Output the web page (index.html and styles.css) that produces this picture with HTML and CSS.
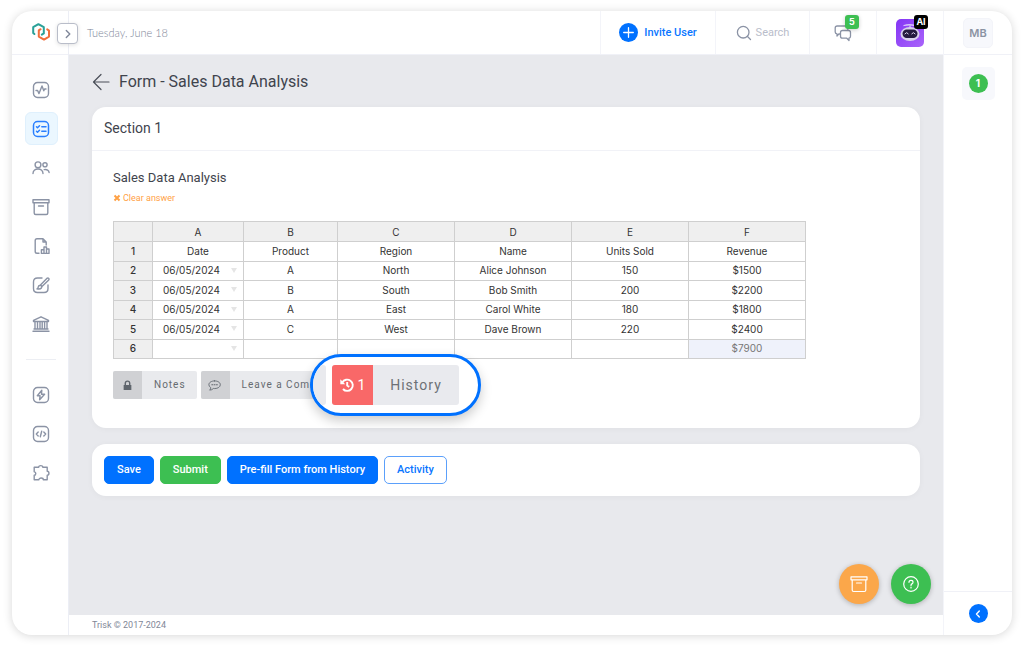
FILE: index.html
```html
<!DOCTYPE html>
<html lang="en">
<head>
<meta charset="utf-8">
<meta name="viewport" content="width=device-width, initial-scale=1">
<title>Form - Sales Data Analysis</title>
<link rel="stylesheet" href="styles.css">
</head>
<body>
<div class="app">
  <aside class="side">
    <div class="side-head">
      <svg class="logo" viewBox="0 0 18 18" fill="none" stroke-width="2" stroke-linejoin="round" stroke-linecap="round">
        <path stroke="#2aa198" d="M2.4 11 1.200 10V4.200L6.400 1.200 11.800 4.200V10.400L9.800 11.600"/>
        <path stroke="#f26f3b" d="M8.600 6.200 6.800 7.400V13.600L12 16.600 17 13.600V7.600L15.200 6.400"/>
      </svg>
      <button class="toggle" type="button" aria-label="Expand menu"><svg viewBox="0 0 10 10"><path d="M3.300 1.500 6.800 5 3.300 8.500"/></svg></button>
    </div>
    <nav class="nav">
      <a href="#" aria-label="Dashboard"><svg viewBox="0 0 18 18"><rect x="1.500" y="1.500" width="15" height="15" rx="4"/><path d="M4 9.500h1.600L7 12.600 10 5l1.800 4.800L12.600 8H14"/></svg></a>
      <a href="#" class="active" aria-label="Forms"><svg viewBox="0 0 18 18"><rect x="1.500" y="1.500" width="15" height="15" rx="4"/><path d="m4.500 6.800 1 1 2-2M4.500 11.200l1 1 2-2M9.800 6.800H14M9.800 11.300H14"/></svg></a>
      <a href="#" aria-label="Users"><svg viewBox="0 0 18 18"><circle cx="6" cy="5.800" r="2.900"/><circle cx="13" cy="5.800" r="2.100"/><path d="M1 14.500c0-6 10-6 10 0M12.200 10.600c2.800-.5 4.700.7 4.900 2.900"/></svg></a>
      <a href="#" aria-label="Archive"><svg viewBox="0 0 18 18"><path d="M1 1.800h16v3H1zM2.200 4.800V15q0 1.500 1.500 1.500h10.600q1.500 0 1.500-1.500V4.800M6.500 8h5"/></svg></a>
      <a href="#" aria-label="Reports"><svg viewBox="0 0 18 18"><path d="M7 16.200H5q-1.800 0-1.800-1.800V3.600Q3.200 1.800 5 1.800h6l3.200 3.200v3M11 1.800V5h3.200M9.400 16.400v-3.600H12v3.600zM12 16.400V10h2.500v6.400zM14.500 12h2.500v4.400h-2.500z"/></svg></a>
      <a href="#" aria-label="Design"><svg viewBox="0 0 18 18"><path d="M10 2H5.500Q1.500 2 1.500 6v6.500q0 4 4 4h6.500q4 0 4-4V9M8.200 9.200 14.800 2.400q1.200-.9 1.900 0t-.2 1.800L9.700 10.800M8.200 9.200q2.400.6 1.200 2.800-1.200 1.500-4.400.8 1.300-.6 1.200-1.800.1-1.500 2-1.800z"/></svg></a>
      <a href="#" aria-label="Institution"><svg viewBox="0 0 18 18"><path d="M1.500 6.500V5.300L9 1.800l7.500 3.500v1.200zM3 6.500v7.300M5.500 6.500v7.300M8 6.500v7.300M10.200 6.500v7.300M12.600 6.500v7.300M15 6.500v7.300M2 14h14M1 16.300h16"/></svg></a>
      <hr>
      <a href="#" aria-label="Automations"><svg viewBox="0 0 18 18"><rect x="1.500" y="1.500" width="15" height="15" rx="4"/><path d="M9.800 4.300 5.300 9.700h2.800l-.5 4 5-5.400H9.500z"/></svg></a>
      <a href="#" aria-label="Developer"><svg viewBox="0 0 18 18"><rect x="1.500" y="1.500" width="15" height="15" rx="4"/><path d="M6.200 7 4.300 9l1.900 2M11.800 7l1.900 2-1.900 2M9.700 6.300l-1.400 5.400"/></svg></a>
      <a href="#" aria-label="Extensions"><svg viewBox="0 0 18 18"><path d="M2.200 3.300h4.500C6.600 1 10.900 1 10.800 3.300h4.400v4c2.300 0 2.300 3.900 0 3.900v4.500h-3.900c0-2.200-4.400-2.200-4.400 0H2.200v-4.400c2.100 0 2.100-3.600 0-3.600z"/></svg></a>
    </nav>
  </aside>

  <div class="center">
    <header class="top">
      <time class="date">Tuesday, June 18</time>
      <a href="#" class="cell invite"><svg viewBox="0 0 19 19"><circle cx="9.500" cy="9.500" r="9.500"/><path d="M9.500 4.700v9.600M4.700 9.500h9.600"/></svg>Invite User</a>
      <button type="button" class="cell search"><svg viewBox="0 0 16 16"><circle cx="7.200" cy="7.200" r="5.800"/><path d="m11.500 11.500 3 3"/></svg>Search</button>
      <button type="button" class="cell chat" aria-label="Messages">
        <span class="badge-host"><svg viewBox="0 0 18 18"><path d="M6 10H4.800L3 12v-2.200Q1.200 9.500 1.200 8V4q0-2 2-2h8.600q2 0 2 2v2M8.500 6.500h6q2 0 2 2v3.700q0 1.600-1.500 2v2.300L12.800 14.200H8.500q-2 0-2-2V8.500q0-2 2-2z"/></svg><span class="badge green">5</span></span>
      </button>
      <button type="button" class="cell ai" aria-label="AI assistant">
        <span class="badge-host bot"><svg viewBox="0 0 28 28"><path d="M8 6.500q5-1.500 11 0M14 6v3" stroke="#d9c6fb" stroke-width="1.300" fill="none"/><ellipse cx="14" cy="15" rx="9.500" ry="7" fill="#d8d0ec"/><rect x="6.500" y="10.500" width="15" height="8.500" rx="4.200" fill="#251a3f"/><path d="M8.900 14.800q1.700-2.600 3.400 0M15.700 14.800q1.700-2.600 3.400 0" stroke="#d8d0ec" stroke-width="1" fill="none"/></svg><span class="badge black">AI</span></span>
      </button>
    </header>

    <main class="main">
      <div class="title-row">
        <a href="#" class="back" aria-label="Back"><svg viewBox="0 0 18 18"><path d="M17 9H1.500M9 1.500 1.500 9 9 16.500"/></svg></a>
        <h1>Form - Sales Data Analysis</h1>
      </div>
      <section class="card">
        <h2 class="card-head">Section 1</h2>
        <div class="card-body">
          <h3>Sales Data Analysis</h3>
          <button type="button" class="clear"><svg viewBox="0 0 8 8"><path d="m1.500 1.500 5 5M6.500 1.500l-5 5"/></svg>Clear answer</button>
          <div class="sheet-wrap">
          <table class="sheet">
            <colgroup><col class="c-num"><col class="c-a"><col class="c-b"><col class="c-w"><col class="c-w"><col class="c-w"><col class="c-w"></colgroup>
            <thead><tr><th></th><th>A</th><th>B</th><th>C</th><th>D</th><th>E</th><th>F</th></tr></thead>
            <tbody>
              <tr><th>1</th><td>Date</td><td>Product</td><td>Region</td><td>Name</td><td>Units Sold</td><td>Revenue</td></tr>
              <tr><th>2</th><td class="pick"><div><span>06/05/2024</span><i></i></div></td><td>A</td><td>North</td><td>Alice Johnson</td><td>150</td><td>$1500</td></tr>
              <tr><th>3</th><td class="pick"><div><span>06/05/2024</span><i></i></div></td><td>B</td><td>South</td><td>Bob Smith</td><td>200</td><td>$2200</td></tr>
              <tr><th>4</th><td class="pick"><div><span>06/05/2024</span><i></i></div></td><td>A</td><td>East</td><td>Carol White</td><td>180</td><td>$1800</td></tr>
              <tr><th>5</th><td class="pick"><div><span>06/05/2024</span><i></i></div></td><td>C</td><td>West</td><td>Dave Brown</td><td>220</td><td>$2400</td></tr>
              <tr><th>6</th><td class="pick"><div><span></span><i></i></div></td><td></td><td></td><td></td><td></td><td class="sum">$7900</td></tr>
            </tbody>
          </table>
          </div>
          <div class="tools">
            <button type="button" class="tool"><span class="ico"><svg viewBox="0 0 10 10"><path fill="#60666d" d="M1.500 4.500h7V9h-7z"/><path d="M3 4.500V3q0-2 2-2t2 2v1.500" fill="none" stroke="#60666d" stroke-width="1.300"/></svg></span><span class="lbl">Notes</span></button>
            <button type="button" class="tool"><span class="ico"><svg viewBox="0 0 12 10"><path d="M6 .8c3 0 5.200 1.500 5.200 3.500S9 7.800 6 7.800L5 7.700Q3.500 9.200 1.500 9.200q1.200-1 1-2.300Q.8 5.900.8 4.300C.8 2.300 3 .8 6 .8z" fill="none" stroke="#60666d" stroke-width=".8"/><path d="M3.500 4.300h.8M5.600 4.300h.8M7.700 4.300h.8" stroke="#60666d"/></svg></span><span class="lbl">Leave a Comment</span></button>
            <div class="lens">
              <span class="lens-edge"></span>
              <button type="button" class="history"><span class="count"><svg viewBox="0 0 14 14"><path d="M2.300 4.500A5.600 5.600 0 1 1 3 11M7.200 4v3.500l2 1.400" fill="none" stroke="#fff" stroke-width="1.900"/><path d="M.3 1.300v4.900h4.900z" fill="#fff"/></svg>1</span><span class="hist-lbl">History</span></button>
            </div>
          </div>
        </div>
      </section>
      <section class="card actions">
        <button type="button" class="btn">Save</button>
        <button type="button" class="btn ok">Submit</button>
        <button type="button" class="btn">Pre-fill Form from History</button>
        <button type="button" class="btn line">Activity</button>
      </section>
      <div class="fabs">
        <button type="button" class="fab orange" aria-label="Archive"><svg viewBox="0 0 18 18"><path d="M1 1.800h16v3H1zM2.200 4.800V15q0 1.500 1.500 1.500h10.600q1.500 0 1.500-1.500V4.800M6.500 8h5"/></svg></button>
        <button type="button" class="fab help" aria-label="Help"><svg viewBox="0 0 18 18"><circle cx="9" cy="9" r="7.300"/><path d="M7 7.300Q7 5.400 9 5.400t2 1.800q0 1.100-1.100 1.700-.9.500-.9 1.500M9 12v.9"/></svg></button>
      </div>
    </main>
    <footer class="foot">Trisk © 2017-2024</footer>
  </div>

  <aside class="rail">
    <div class="rail-head"><button type="button" class="avatar">MB</button></div>
    <div class="rail-body"><button type="button" class="notice"><span>1</span></button></div>
    <div class="rail-foot"><button type="button" class="collapse" aria-label="Collapse"><svg viewBox="0 0 10 10"><path d="M6.300 2 3.500 5l2.800 3"/></svg></button></div>
  </aside>
</div>
</body>
</html>
```
FILE: styles.css
```css
* { box-sizing: border-box; }
body {
  margin: 0;
  padding: 11px 12px 14px;
  min-height: 100vh;
  display: flex;
  background: #fff;
  color: #3f444d;
  font-family: Roboto, "Liberation Sans", sans-serif;
}
button { font: inherit; color: inherit; border: 0; padding: 0; background: none; cursor: pointer; }
a { color: inherit; text-decoration: none; }
h1, h2, h3 { margin: 0; font-weight: 400; }
svg { display: block; fill: none; stroke-linecap: round; stroke-linejoin: round; }

.app {
  flex: 1;
  display: grid;
  grid-template-columns: 57px 1fr 69px;
  border-radius: 20px;
  background: #fff;
  box-shadow: 0 1px 10px rgba(0, 0, 0, .16);
}

/* left menu */
.side { border-right: 1px solid #eceef5; }
.side-head {
  position: relative;
  height: 44px;
  padding: 12px 0 0 20px;
  border-bottom: 1px solid #f0f1f7;
}
.logo { width: 18px; height: 18px; }
.toggle {
  position: absolute;
  top: 12px;
  right: -10px;
  width: 21px;
  height: 21px;
  display: grid;
  place-items: center;
  background: #fff;
  border: 1px solid #b9bdc9;
  border-radius: 4px;
  box-shadow: 0 1px 4px rgba(0, 0, 0, .12);
}
.toggle svg { width: 10px; height: 10px; stroke: #7f8799; stroke-width: 1.4; }
.nav { display: flex; flex-direction: column; align-items: center; gap: 6px; padding: 18px 0 0 2px; }
.nav a { width: 33px; height: 33px; display: grid; place-items: center; border: 1px solid transparent; border-radius: 6px; }
.nav a.active { background: #ebf7ff; border-color: #dff0fd; }
.nav svg { width: 18px; height: 18px; stroke: #8b93a5; stroke-width: 1.4; }
.nav .active svg { stroke: #2a7fff; stroke-width: 1.5; }
.nav hr { width: 30px; height: 1px; margin: 13px 0 12px; border: 0; background: #eceef3; }

/* top bar */
.center { min-width: 0; display: flex; flex-direction: column; }
.top { height: 44px; display: flex; border-bottom: 1px solid #f0f1f7; }
.date { flex: 1; align-self: center; padding-left: 18px; font: 300 11px/16px Lato, sans-serif; color: #7d8598; }
.cell {
  display: flex;
  align-items: center;
  justify-content: center;
  border-left: 1px solid #f3f4f9;
  font: 400 11px/16px Roboto, sans-serif;
}
.invite { width: 115px; gap: 6px; color: #0a76ff; font-weight: 500; }
.invite svg { width: 19px; height: 19px; stroke: #fff; stroke-width: 1.3; }
.invite circle { fill: #0071ff; stroke: none; }
.search { width: 94px; gap: 4px; color: #b9bdca; }
.search svg { width: 16px; height: 16px; stroke: #8b93a5; stroke-width: 1.3; }
.chat { width: 67px; }
.chat svg { width: 18px; height: 18px; stroke: #8b93a5; stroke-width: 1.3; }
.ai { width: 67px; }
.badge-host { position: relative; display: block; }
.bot { border-radius: 5px; background: linear-gradient(135deg, #8435f5, #a964fa); }
.bot svg { width: 28px; height: 28px; }
.badge {
  position: absolute;
  width: 14px;
  height: 14px;
  border-radius: 3px;
  color: #fff;
  font: 700 9px/14px Inter, sans-serif;
  text-align: center;
}
.green { top: -9px; right: -7px; background: #3dbf52; box-shadow: 0 1px 4px rgba(0, 0, 0, .2); }
.black { top: -4px; right: -4px; background: #000; }

/* page */
.main { position: relative; flex: 1; padding: 17px 23px; background: #e8e9ed; }
.title-row { display: flex; align-items: center; gap: 9px; height: 20px; margin-bottom: 15px; }
.back svg { width: 18px; height: 18px; stroke: #4a4f58; stroke-width: 1.2; }
h1 { font-size: 16px; line-height: 20px; }
.card { background: #fff; border-radius: 14px; box-shadow: 0 1px 6px rgba(0, 0, 0, .04); }
.card-head { padding: 12px; font-size: 14px; line-height: 19px; border-bottom: 1px solid #f1f2f7; }
.card-body { padding: 17px 21px 29px; }
h3 { font-size: 13px; line-height: 20px; }
.clear { display: flex; align-items: center; gap: 2px; font-size: 9px; line-height: 20px; color: #ffa145; }
.clear svg { width: 8px; height: 8px; stroke: #ffa145; stroke-width: 2; stroke-linecap: butt; }
.sheet-wrap { padding-top: 13px; overflow-x: auto; }
.sheet {
  width: 693px;
  table-layout: fixed;
  border-collapse: collapse;
  font: 400 10px/16px Inter, sans-serif;
  color: #333;
}
.c-num { width: 39px; }
.c-a { width: 91px; }
.c-b { width: 94px; }
.c-w { width: 117px; }
.sheet th, .sheet td { height: 19px; padding: 0 0 2px; border: 1px solid #cfcfcf; text-align: center; font-weight: 400; }
.sheet thead th { height: 21px; padding: 0; }
.sheet tr:nth-child(odd) td, .sheet tr:nth-child(odd) th { height: 20px; }
.sheet th { background: #efefef; }
.sheet tbody th { font-weight: 500; }
.pick div { display: flex; align-items: center; justify-content: space-between; padding: 0 6px 0 10px; }
.pick i { border: 3px solid transparent; border-top: 5px solid #e5e5e5; border-bottom: 0; }
.sheet .sum { background: #eff2fb; color: #777; }

/* note, comment and history buttons */
.tools { position: relative; display: flex; gap: 4px; margin-top: 12px; }
.tool { display: flex; height: 28px; background: #e9eaed; border-radius: 2px; overflow: hidden; font-size: 10px; line-height: 28px; letter-spacing: 1px; color: #666b70; }
.ico { width: 29px; height: 28px; display: grid; place-items: center; background: #d0d1d4; }
.ico svg { height: 11px; }
.lbl { padding: 0 11px 0 12px; }
.lens {
  position: absolute;
  top: -17px;
  left: 197px;
  width: 171px;
  height: 62px;
  display: flex;
  align-items: center;
  gap: 6px;
  overflow: hidden;
  border: 3px solid #0071ff;
  border-radius: 31px;
  background: #fff;
  box-shadow: 0 5px 12px rgba(0, 0, 0, .2);
}
.lens-edge { width: 13px; height: 40px; background: #e9eaee; border-radius: 0 3px 3px 0; }
.history { display: flex; height: 40px; background: #e9eaee; border-radius: 3px; overflow: hidden; line-height: 40px; color: #6d7176; }
.count { width: 41px; display: flex; align-items: center; justify-content: center; gap: 4px; background: #f96868; color: #fff; font-size: 14px; }
.count svg { width: 14px; height: 14px; stroke-linecap: butt; }
.hist-lbl { width: 86px; text-align: center; font-size: 14px; letter-spacing: 1px; }

.actions { display: flex; flex-wrap: wrap; gap: 6px; margin-top: 16px; padding: 12px; }
.btn {
  padding: 0 12px;
  border: 1px solid #0071ff;
  border-radius: 5px;
  background: #0071ff;
  color: #fff;
  font-size: 11px;
  font-weight: 500;
  line-height: 26px;
}
.btn.ok { background: #3dbf52; border-color: #3dbf52; }
.btn.line { background: #fff; border-color: #5ba0fb; color: #0a76ff; }

.fabs { position: absolute; right: 12px; bottom: 11px; display: flex; gap: 12px; }
.fab { width: 40px; height: 40px; display: grid; place-items: center; border-radius: 50%; box-shadow: 0 1px 5px rgba(0, 0, 0, .25); }
.fab svg { width: 18px; height: 18px; stroke: #fff; stroke-width: 1.2; }
.orange { background: #fba74a; }
.help { background: #3dbf52; }

.foot { padding: 0 23px; height: 20px; font-size: 9px; line-height: 21px; color: #7f8797; }

/* right rail */
.rail { display: flex; flex-direction: column; border-left: 1px solid #f3f4f9; }
.rail-head { height: 44px; display: grid; place-items: center; border-bottom: 1px solid #f0f1f7; }
.avatar { width: 30px; height: 30px; border-radius: 5px; background: #f7f8fc; border: 1px solid #f3f4f9; color: #8b93a3; font: 600 11px/16px Inter, sans-serif; }
.rail-body { flex: 1; padding-top: 12px; display: flex; justify-content: center; align-items: flex-start; }
.notice { width: 33px; height: 33px; display: grid; place-items: center; border-radius: 5px; background: #f7f8fc; }
.notice span { width: 19px; height: 19px; border-radius: 50%; background: #3dbf52; color: #fff; font: 700 10px/19px Inter, sans-serif; }
.rail-foot { height: 44px; display: grid; place-items: center; border-top: 1px solid #f0f1f7; }
.collapse { width: 19px; height: 19px; display: grid; place-items: center; border-radius: 50%; background: #0071ff; }
.collapse svg { width: 10px; height: 10px; stroke: #fff; stroke-width: 1.4; }
```
